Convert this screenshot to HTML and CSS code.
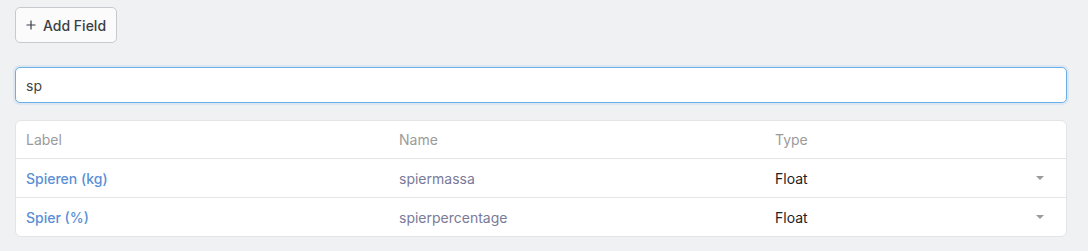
FILE: index.html
```html
<!DOCTYPE html>
<html lang="nl">
<head>
    <meta charset="UTF-8">
    <meta name="viewport" content="width=device-width, initial-scale=1.0">
    <title>Fields</title>
    <link rel="stylesheet" href="styles.css">
</head>
<body>
    <div class="page">
        <div class="toolbar">
            <button class="add-btn">
                <svg class="plus" width="10" height="10" viewBox="0 0 10 10">
                    <path d="M5 0.5V9.5M0.5 5H9.5" stroke="#3a3f46" stroke-width="1.2" fill="none"/>
                </svg>
                Add Field
            </button>
        </div>

        <input class="search" type="text" value="sp">

        <div class="fields">
            <div class="row head">
                <div class="cell">Label</div>
                <div class="cell">Name</div>
                <div class="cell">Type</div>
            </div>
            <div class="row">
                <div class="cell label">Spieren (kg)</div>
                <div class="cell name">spiermassa</div>
                <div class="cell type">Float <span class="caret"></span></div>
            </div>
            <div class="row">
                <div class="cell label">Spier (%)</div>
                <div class="cell name">spierpercentage</div>
                <div class="cell type">Float <span class="caret"></span></div>
            </div>
        </div>
    </div>
</body>
</html>
```

FILE: styles.css
```css
body {
    margin: 0;
    background-color: #f0f1f3;
    font-family: 'Inter', sans-serif;
    font-size: 14px;
    color: #2d3035;
}

.page {
    padding: 7px 21px 0 15px;
}

.toolbar {
    display: flex;
    margin-bottom: 24px;
}

.add-btn {
    display: flex;
    align-items: center;
    gap: 7px;
    height: 36px;
    padding: 0 10px 0 10px;
    background-color: #fbfbfc;
    border: 1px solid #c6cacf;
    border-radius: 5px;
    font-family: 'Inter', sans-serif;
    font-size: 14px;
    font-weight: 500;
    color: #3a3f46;
}

.search {
    display: block;
    box-sizing: border-box;
    width: 100%;
    height: 36px;
    padding: 0 10px;
    border: 1px solid #6aafe8;
    border-radius: 5px;
    box-shadow: 0 0 0 2px rgba(106, 175, 232, 0.15);
    font-family: 'Inter', sans-serif;
    font-size: 14px;
    color: #444;
    outline: none;
    margin-bottom: 17px;
}

.fields {
    background-color: white;
    border: 1px solid #e3e4e6;
    border-radius: 6px;
}

.row {
    display: grid;
    grid-template-columns: 373px 376px 1fr;
    height: 38px;
    align-items: center;
    border-top: 1px solid #e3e4e6;
}

.row.head {
    border-top: none;
    height: 37px;
}

.cell {
    padding: 0 10px;
}

.head .cell {
    color: #9b9b9b;
}

.label {
    color: #5a8fd6;
    font-weight: 500;
}

.name {
    color: #7a7a98;
}

.type {
    display: flex;
    justify-content: space-between;
    align-items: center;
    color: #1f2226;
    padding-right: 22px;
}

.caret {
    width: 0;
    height: 0;
    border-left: 4px solid transparent;
    border-right: 4px solid transparent;
    border-top: 4px solid #9a9a9a;
}
```
